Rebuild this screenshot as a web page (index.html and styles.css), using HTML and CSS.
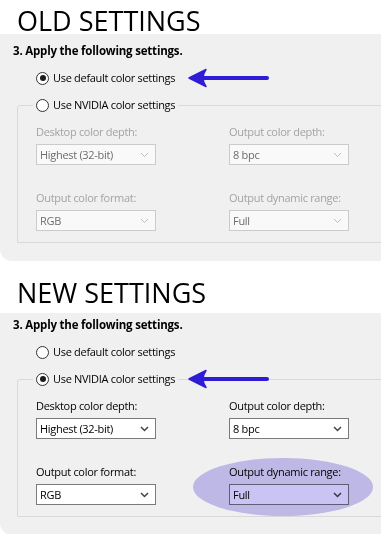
FILE: index.html
```html
<!DOCTYPE html>
<html lang="en">
<head>
    <meta charset="UTF-8">
    <meta name="viewport" content="width=device-width, initial-scale=1.0">
    <title>Old and new color settings</title>
    <link rel="stylesheet" href="styles.css">
</head>
<body>

    <!-- before -->
    <h1 class="heading">OLD SETTINGS</h1>
    <div class="panel">
        <div class="step-title">3. Apply the following settings.</div>
        <div class="radio-row">
            <span class="radio checked"></span>
            <span class="radio-text">Use default color settings
                <svg class="arrow" width="82" height="20" viewBox="0 0 82 20"><path d="M12 10 L79 10" stroke="#2f1cd6" stroke-width="4" stroke-linecap="round"/><path d="M1 10 L18 1.5 Q12 10 18 18.5 Z" fill="#2f1cd6" stroke="#2f1cd6" stroke-width="1.5" stroke-linejoin="round"/></svg>
            </span>
        </div>
        <fieldset class="group">
            <legend class="radio-row legend">
                <span class="radio"></span>
                <span class="radio-text">Use NVIDIA color settings</span>
            </legend>
            <div class="fields disabled">
                <div class="field">
                    <div class="field-label">Desktop color depth:</div>
                    <div class="combo">Highest (32-bit)<svg class="chev" width="9" height="6" viewBox="0 0 9 6"><path d="M1 1 L4.5 4.5 L8 1" fill="none"/></svg></div>
                </div>
                <div class="field">
                    <div class="field-label">Output color depth:</div>
                    <div class="combo">8 bpc<svg class="chev" width="9" height="6" viewBox="0 0 9 6"><path d="M1 1 L4.5 4.5 L8 1" fill="none"/></svg></div>
                </div>
                <div class="field">
                    <div class="field-label">Output color format:</div>
                    <div class="combo">RGB<svg class="chev" width="9" height="6" viewBox="0 0 9 6"><path d="M1 1 L4.5 4.5 L8 1" fill="none"/></svg></div>
                </div>
                <div class="field">
                    <div class="field-label">Output dynamic range:</div>
                    <div class="combo">Full<svg class="chev" width="9" height="6" viewBox="0 0 9 6"><path d="M1 1 L4.5 4.5 L8 1" fill="none"/></svg></div>
                </div>
            </div>
        </fieldset>
    </div>

    <!-- after -->
    <h1 class="heading heading-new">NEW SETTINGS</h1>
    <div class="panel panel-new">
        <div class="step-title">3. Apply the following settings.</div>
        <div class="radio-row">
            <span class="radio"></span>
            <span class="radio-text">Use default color settings</span>
        </div>
        <fieldset class="group">
            <legend class="radio-row legend">
                <span class="radio checked"></span>
                <span class="radio-text">Use NVIDIA color settings
                    <svg class="arrow" width="82" height="20" viewBox="0 0 82 20"><path d="M12 10 L79 10" stroke="#2f1cd6" stroke-width="4" stroke-linecap="round"/><path d="M1 10 L18 1.5 Q12 10 18 18.5 Z" fill="#2f1cd6" stroke="#2f1cd6" stroke-width="1.5" stroke-linejoin="round"/></svg>
                </span>
            </legend>
            <div class="fields">
                <div class="field">
                    <div class="field-label">Desktop color depth:</div>
                    <div class="combo">Highest (32-bit)<svg class="chev" width="9" height="6" viewBox="0 0 9 6"><path d="M1 1 L4.5 4.5 L8 1" fill="none"/></svg></div>
                </div>
                <div class="field">
                    <div class="field-label">Output color depth:</div>
                    <div class="combo">8 bpc<svg class="chev" width="9" height="6" viewBox="0 0 9 6"><path d="M1 1 L4.5 4.5 L8 1" fill="none"/></svg></div>
                </div>
                <div class="field">
                    <div class="field-label">Output color format:</div>
                    <div class="combo">RGB<svg class="chev" width="9" height="6" viewBox="0 0 9 6"><path d="M1 1 L4.5 4.5 L8 1" fill="none"/></svg></div>
                </div>
                <div class="field">
                    <span class="highlight"></span>
                    <div class="field-label">Output dynamic range:</div>
                    <div class="combo">Full<svg class="chev" width="9" height="6" viewBox="0 0 9 6"><path d="M1 1 L4.5 4.5 L8 1" fill="none"/></svg></div>
                </div>
            </div>
        </fieldset>
    </div>

</body>
</html>
```

FILE: styles.css
```css
body {
    margin: 0;
    background: #fff;
    font-family: "Open Sans", Arial, sans-serif;
    font-size: 11px;
    letter-spacing: -0.3px;
    color: #000;
    overflow: hidden;
}
.heading {
    margin: 0 0 0 17px;
    padding-top: 8px;
    font-size: 27px;
    line-height: 26px;
    font-weight: 400;
    letter-spacing: 0;
}
.heading-new {
    margin-top: 11px;
    padding-bottom: 7px;
}
.panel {
    position: relative;
    background: #f0f0f0;
    padding: 9px 0 18px;
    border-bottom-left-radius: 12px;
    overflow: hidden;
}
.panel-new {
    padding-top: 4px;
    padding-bottom: 18px;
}
.step-title {
    margin-left: 13px;
    font-size: 11.5px;
    font-weight: 700;
    line-height: 16px;
    letter-spacing: -0.2px;
}
.radio-row {
    display: flex;
    align-items: center;
    margin: 11px 0 0 36px;
    line-height: 16px;
    height: 16px;
}
.radio {
    width: 11px;
    height: 11px;
    border: 1px solid #333;
    border-radius: 50%;
    background: #fff;
    margin-right: 4px;
    display: flex;
    align-items: center;
    justify-content: center;
    flex: none;
}
.radio.checked::after {
    content: "";
    width: 6px;
    height: 6px;
    border-radius: 50%;
    background: #1b1b1b;
}
.radio-text {
    position: relative;
    white-space: nowrap;
}
.arrow {
    position: absolute;
    left: calc(100% + 13px);
    top: -2px;
}
.group {
    margin: 11px -40px 0 17px;
    padding: 0 0 11px 18px;
    border: 1px solid #d9d9d9;
    border-top-left-radius: 3px;
    min-width: 0;
}
.legend {
    margin: 0 0 0 -3px;
    padding: 0 3px;
}
.fields {
    display: grid;
    grid-template-columns: 120px 120px;
    column-gap: 73px;
    row-gap: 25px;
    padding-top: 11px;
}
.field {
    position: relative;
}
.field-label {
    line-height: 16px;
    margin-bottom: 4px;
    white-space: nowrap;
    position: relative;
}
.combo {
    position: relative;
    height: 19px;
    line-height: 19px;
    border: 1px solid #7a7a7a;
    background: #fff;
    padding-left: 3px;
    display: flex;
    align-items: center;
    justify-content: space-between;
}
.chev {
    margin-right: 6px;
}
.chev path {
    stroke: #444;
    stroke-width: 1.5;
}
.disabled .field-label {
    color: #a3a3a3;
}
.disabled .combo {
    border-color: #cbcbcb;
    background: #f9f9f9;
    color: #6d6d6d;
}
.disabled .chev path {
    stroke: #bdbdbd;
    stroke-width: 1;
}
.highlight {
    position: absolute;
    left: -36px;
    top: -6px;
    width: 180px;
    height: 58px;
    border-radius: 50%;
    background: #c9c4f4;
    mix-blend-mode: multiply;
    z-index: 1;
}
```
